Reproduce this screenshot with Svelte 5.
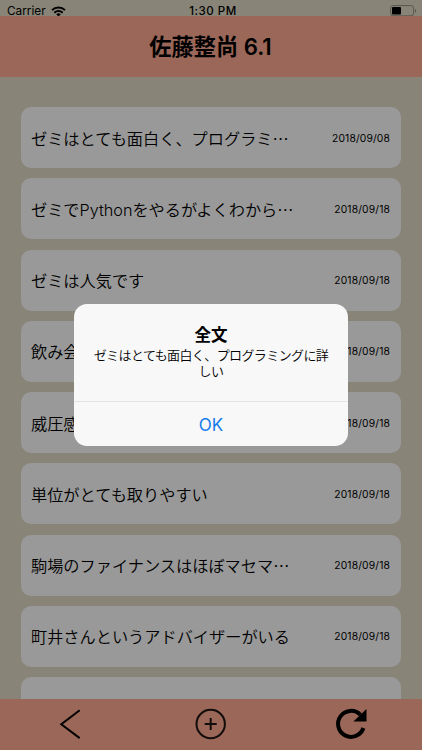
<script>
const title = '佐藤整尚 6.1'
const message = 'ゼミはとても面白く、プログラミングに詳しい'
const reviews = [
  { text: 'ゼミはとても面白く、プログラミ', more: true, date: '2018/09/08' },
  { text: 'ゼミでPythonをやるがよくわから', more: true, date: '2018/09/18' },
  { text: 'ゼミは人気です', date: '2018/09/18' },
  { text: '飲み会', date: '2018/09/18' },
  { text: '威圧感', date: '2018/09/18' },
  { text: '単位がとても取りやすい', date: '2018/09/18' },
  { text: '駒場のファイナンスはほぼマセマ', more: true, date: '2018/09/18' },
  { text: '町井さんというアドバイザーがいる', date: '2018/09/18' },
  { text: '', date: '' }
]
</script>

<div class="screen">
  <div class="status">
    <div class="carrier">
      <span>Carrier</span>
      <svg width="15" height="11" viewBox="0 0 15 11">
        <g fill="none" stroke="#000" stroke-width="1.9">
          <path d="M1 4.2a9.2 9.2 0 0 1 13 0" />
          <path d="M3.3 6.7a6 6 0 0 1 8.4 0" />
        </g>
        <path d="M7.5 10.6 5.2 8.3a3.25 3.25 0 0 1 4.6 0z" />
      </svg>
    </div>
    <span class="time">1:30 PM</span>
    <svg class="battery" width="27" height="12" viewBox="0 0 27 12">
      <rect x=".6" y=".6" width="23" height="10.2" rx="2.5" fill="none" stroke="#5a574f" stroke-width="1" />
      <rect x="2" y="2" width="9" height="7.4" rx="1" />
      <path d="M25 4v3.8c1.7-.5 1.7-3.3 0-3.8z" fill="#5a574f" />
    </svg>
  </div>
  <header>{title}</header>
  <main>
    {#each reviews as review, index (index)}
      <div class="card">
        <div class="text">{review.text}{#if review.more}<span class="more">…</span>{/if}</div>
        <div class="date">{review.date}</div>
      </div>
    {/each}
  </main>
  <footer>
    <button aria-label="back">
      <svg width="30" height="36" viewBox="0 0 30 36">
        <path d="M24.7 3.2 6.3 17.3l18.4 13.8" fill="none" stroke="#000" stroke-width="2" />
      </svg>
    </button>
    <button aria-label="add">
      <svg width="36" height="36" viewBox="0 0 36 36">
        <g fill="none" stroke="#120c0a" stroke-width="2">
          <circle cx="17.7" cy="17" r="14.2" />
          <path d="M17.7 11v12M11.7 17h12" />
        </g>
      </svg>
    </button>
    <button aria-label="reload">
      <svg width="36" height="36" viewBox="0 0 36 36">
        <path d="M29.4 21A13 13 0 1 1 26.4 7.8" fill="none" stroke="#000" stroke-width="4" />
        <path d="M32.5 1.9V14.6H19.4z" />
      </svg>
    </button>
  </footer>
  <div class="dialog">
    <div class="body">
      <h2>全文</h2>
      <p>{message}</p>
    </div>
    <button class="ok">OK</button>
  </div>
</div>

<style>
:global(body) {
  overflow: hidden;
}

.screen {
  position: relative;
  display: flex;
  flex-direction: column;
  width: 422px;
  height: 750px;
  overflow: hidden;
  background: #888477;
  color: #000;
  font-family: Inter, 'Noto Sans CJK JP', sans-serif;
}

.status {
  display: grid;
  grid-template-columns: 1fr auto 1fr;
  align-items: center;
  height: 16px;
  padding: 5px 5px 0 7px;
  box-sizing: border-box;
  font-size: 11.8px;
  line-height: 11px;
}

.carrier {
  display: flex;
  gap: 5px;
}

.time {
  padding-left: 2px;
  font-size: 11.5px;
  font-weight: 500;
  letter-spacing: 0.5px;
}

.battery {
  justify-self: end;
}

header {
  height: 61px;
  flex-shrink: 0;
  padding-right: 1px;
  background: #9a6758;
  text-align: center;
  font-size: 22.2px;
  font-weight: 600;
  line-height: 61px;
}

main {
  flex: 1;
  min-height: 0;
  overflow: hidden;
  display: flex;
  flex-direction: column;
  gap: 10.25px;
  padding: 30.2px 21px 0;
}

.card {
  display: flex;
  align-items: center;
  justify-content: space-between;
  flex-shrink: 0;
  height: 61px;
  padding: 0 11px 0 10px;
  box-sizing: border-box;
  border-radius: 10px;
  background: #999;
}

.text {
  font-size: 16.2px;
  font-weight: 350;
  white-space: nowrap;
}

.more {
  font-family: 'Noto Sans CJK JP', sans-serif;
}

.date {
  font-size: 10.3px;
  letter-spacing: 0.15px;
}

footer {
  display: flex;
  height: 51px;
  flex-shrink: 0;
  background: #9a6758;
}

button {
  display: flex;
  align-items: center;
  justify-content: center;
  flex: 1;
  padding: 0;
  border: 0;
  background: none;
  font-family: inherit;
}

.dialog {
  position: absolute;
  top: 303.7px;
  left: 73.7px;
  display: flex;
  flex-direction: column;
  width: 274.6px;
  height: 142.8px;
  border-radius: 13px;
  overflow: hidden;
  background: #f8f8f8;
}

.body {
  height: 98px;
  padding: 20px 16px 0;
  box-sizing: border-box;
  border-bottom: 1px solid #e3e3e3;
  text-align: center;
}

h2 {
  margin: 0;
  font-size: 16.5px;
  font-weight: 700;
  line-height: 22px;
}

p {
  margin: 1.5px 0 0;
  font-size: 13px;
  font-weight: 350;
  letter-spacing: -0.6px;
  line-height: 16px;
}

.ok {
  padding-top: 1px;
  color: #147bea;
  font-size: 17px;
}
</style>
